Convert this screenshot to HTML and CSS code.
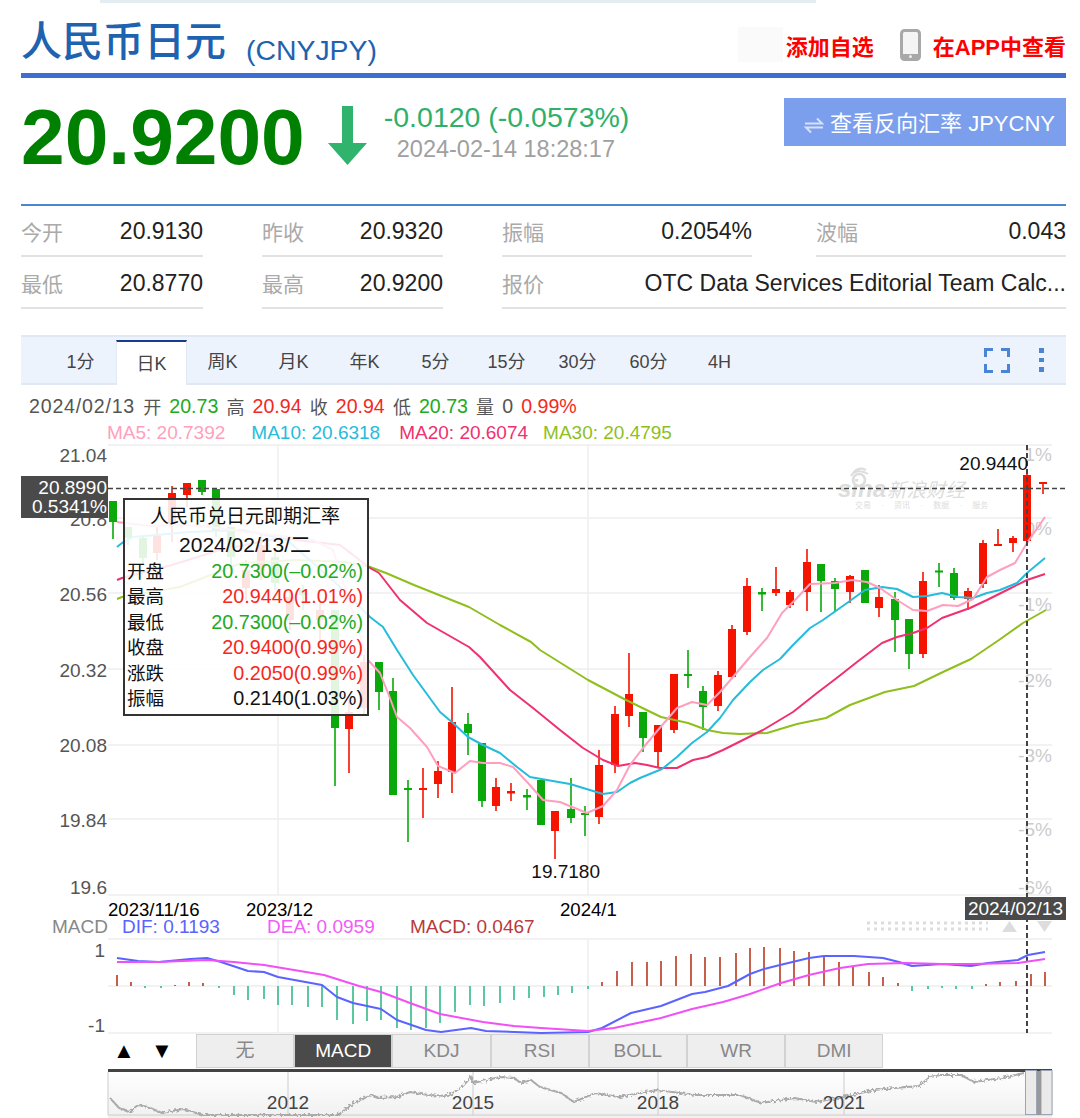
FILE: index.html
```html
<!DOCTYPE html>
<html lang="zh-CN">
<head>
  <meta charset="UTF-8">
  <title>人民币日元 (CNYJPY)</title>
  <link rel="stylesheet" href="styles.css">
</head>
<body>
  <div class="top-strip"></div>
  <div class="page">

    <header class="title-row">
      <h1>人民币日元</h1>
      <span class="symbol">(CNYJPY)</span>
      <div class="title-actions">
        <span class="blank-box"></span>
        <a class="action">添加自选</a>
        <svg class="phone" viewBox="0 0 21 32">
          <rect x="1.5" y="1.5" width="18" height="29" rx="3" fill="#f4f4f4" stroke="#a8a8a8" stroke-width="3"/>
          <rect x="1.5" y="25" width="18" height="5" fill="#a8a8a8"/>
          <circle cx="10.500" cy="27.500" r="1.500" fill="#eee"/>
        </svg>
        <a class="action">在APP中查看</a>
      </div>
    </header>

    <section class="quote">
      <div class="price">20.9200</div>
      <svg class="down-arrow" viewBox="0 0 39 59">
        <path d="M14 0h11v37h14L19.500 59 0 37h14z"/>
      </svg>
      <div class="change">
        <div class="change-value">-0.0120 (-0.0573%)</div>
        <div class="change-time">2024-02-14 18:28:17</div>
      </div>
      <a class="reverse-btn">
        <svg class="swap" viewBox="0 0 20 18">
          <path d="M1 7.500H18L13 2.500M19 11.500H2L7 16.500" fill="none" stroke="#d5e0fa" stroke-width="2"/>
        </svg>
        <span>查看反向汇率 JPYCNY</span>
      </a>
    </section>

    <section class="stats">
      <div class="stat"><span class="stat-label">今开</span><span class="stat-value">20.9130</span></div>
      <div class="stat"><span class="stat-label">昨收</span><span class="stat-value">20.9320</span></div>
      <div class="stat"><span class="stat-label">振幅</span><span class="stat-value">0.2054%</span></div>
      <div class="stat stat-last"><span class="stat-label">波幅</span><span class="stat-value">0.043</span></div>
      <div class="stat"><span class="stat-label">最低</span><span class="stat-value">20.8770</span></div>
      <div class="stat"><span class="stat-label">最高</span><span class="stat-value">20.9200</span></div>
      <div class="stat stat-wide"><span class="stat-label">报价</span><span class="stat-value">OTC Data Services Editorial Team Calc...</span></div>
    </section>

    <nav class="tabs">
      <a class="tab">1分</a>
      <a class="tab active">日K</a>
      <a class="tab">周K</a>
      <a class="tab">月K</a>
      <a class="tab">年K</a>
      <a class="tab">5分</a>
      <a class="tab">15分</a>
      <a class="tab">30分</a>
      <a class="tab">60分</a>
      <a class="tab">4H</a>
      <div class="tab-tools">
        <svg class="fullscreen" viewBox="0 0 26 25">
          <path d="M1.500 9V1.500H9M17 1.500H24.500V9M24.500 16V23.500H17M9 23.500H1.500V16" fill="none" stroke="#4a84d4" stroke-width="3"/>
        </svg>
        <div class="more"><i></i><i></i><i></i></div>
      </div>
    </nav>

    <div class="day-info">
      <span class="muted day-date">2024/02/13</span>
      <span class="muted cjk">开</span><span class="up">20.73</span>
      <span class="muted cjk">高</span><span class="dn">20.94</span>
      <span class="muted cjk">收</span><span class="dn">20.94</span>
      <span class="muted cjk">低</span><span class="up">20.73</span>
      <span class="muted cjk">量</span><span class="muted">0</span>
      <span class="dn">0.99%</span>
    </div>

    <div class="ma-info">
      <span class="ma5">MA5: 20.7392</span>
      <span class="ma10">MA10: 20.6318</span>
      <span class="ma20">MA20: 20.6074</span>
      <span class="ma30">MA30: 20.4795</span>
    </div>

    <div class="chart">
      <svg class="chart-svg" viewBox="21 444 1045 674">
        <defs>
          <linearGradient id="thumbFade" x1="0" y1="0" x2="0" y2="1">
            <stop offset="0" stop-color="#fff"/>
            <stop offset="1" stop-color="#f0f0f0"/>
          </linearGradient>
          <filter id="rough" x="-2%" y="-30%" width="104%" height="160%">
            <feTurbulence type="fractalNoise" baseFrequency="0.35" numOctaves="2" seed="4"/>
            <feDisplacementMap in="SourceGraphic" scale="5"/>
          </filter>
        </defs>

        <!-- grid -->
        <path class="grid" d="M108 445H1052M108 518H1052M108 593H1052M108 669H1052M108 745H1052M108 819H1052M108 895H1052M278 445V895M588 445V895M108 939H1052M108 986H1052M108 1033H1052M278 939V1033M588 939V1033"/>

        <!-- axis labels -->
        <g class="axis">
          <text x="107" y="462">21.04</text>
          <text x="107" y="526">20.8</text>
          <text x="107" y="601">20.56</text>
          <text x="107" y="677">20.32</text>
          <text x="107" y="752">20.08</text>
          <text x="107" y="827">19.84</text>
          <text x="107" y="894">19.6</text>
          <text x="105" y="957">1</text>
          <text x="105" y="1032">-1</text>
        </g>
        <g class="pct">
          <text x="1052" y="461">1%</text>
          <text x="1052" y="535">0%</text>
          <text x="1052" y="611">-1%</text>
          <text x="1052" y="687">-2%</text>
          <text x="1052" y="762">-3%</text>
          <text x="1052" y="836">-5%</text>
          <text x="1052" y="894">-6%</text>
        </g>

        <!-- watermark -->
        <g class="watermark">
          <circle cx="859" cy="480" r="6" fill="none" stroke="#ddd" stroke-width="2.500"/>
          <path d="M851 476C854 470 862 470 868 474M853 473C857 468 862 468 866 470" fill="none" stroke="#ddd" stroke-width="2"/>
          <text class="wm-sina" x="838" y="497">sina</text>
          <text class="wm-cn" x="887" y="497">新浪财经</text>
          <text class="wm-small" x="855" y="508">交易 · 资讯 · 数据 · 服务</text>
        </g>

        <!-- candles -->
        <path class="wick green" d="M113 501V539M128 527V545M143 535V565M202 480V495M216 489V537M231 527V570M275 552V590M303 585V610M335 610V786M379 662V710M393 678V795M408 780V842M468 713V755M482 743V807M527 789V810M541 780V825M571 778V823M585 806V836M643 712V752M688 650V688M703 686V730M762 588V611M821 564V612M835 578V612M865 570V603M895 592V652M909 619V669M939 563V587M954 568V600"/>
        <path class="body green" d="M113 501V522M128 527V538M143 538V558M202 480V492M216 489V532M231 527V557M275 557V583M303 590V595M335 610V728M379 662V692M393 691V795M408 788V790M468 724V733M482 743V801M527 795V797.500M541 780V825M571 809V818M585 813V815M643 712V738M688 674V676M703 691V707M762 592V594.500M821 564V581M835 581V589M865 570V603M895 599V620M909 619V654M939 570.500V572.500M954 573V598"/>
        <path class="wick red" d="M157 527V560M172 486V542M187 483V507M246 560V600M261 535V580M290 590V630M320 600V640M349 700V773M364 655V715M423 768V818M438 761V798M452 687V793M496 778V811M511 783V801M555 811V859M599 750V824M615 706V773M629 653V727M658 725V768M674 674V733M718 671V711M732 625V677M747 578V635M776 567V596M790 590V608M807 549V611M850 575V603M879 585V617M923 572V658M968 588V610M983 540V588M998 529V546M1013 536V552M1027 473V541M1043 482V494"/>
        <path class="body red" d="M157 535V553M172 493V526M187 483V495M246 570V588M261 545V571M290 597V620M320 610V620M349 712V729M364 662V708M423 788V790M438 771V784M452 722V772M496 787V806M511 791V793.500M555 811V831M599 765V817M615 714V765M629 694V716M658 725V752M674 674V730M718 675V706M732 629V677M747 586V632M776 589V593M790 592V605M807 562V592M850 576V592M879 597V608M923 581V654M968 591V599M983 543V584M998 544V546M1013 538V543M1027 475V541M1043 482V484"/>

        <!-- moving averages -->
        <polyline class="line ma30-line" points="117,599 122,597 180,587 241,563 297,560 345,562 370,567 386,573 414,585 469,607 500,625 531,642 540,650 588,680 626,700 661,717 688,723 707,730 723,733 740,734 767,733 797,724 826,718 850,705 885,692 914,686 943,672 971,659 999,640 1023,623 1046,610"/>
        <polyline class="line ma20-line" points="117,580 122,578 172,565 220,550 280,538 340,545 370,568 379,573 400,600 427,623 469,647 480,657 510,690 533,708 560,730 583,748 603,760 618,766 635,763 647,765 660,768 677,768 693,760 707,757 723,750 743,740 763,730 793,712 817,693 838,677 857,662 882,643 897,637 913,633 927,628 942,618 970,608 987,600 1007,590 1027,580 1045,574"/>
        <polyline class="line ma10-line" points="117,547 122,543 133,537 190,532 243,530 287,540 340,587 370,617 383,627 397,650 413,675 440,712 453,723 468,737 483,745 500,753 517,767 530,777 547,780 570,784 603,794 617,792 630,783 640,778 662,769 677,757 692,743 707,732 720,718 733,700 750,682 763,670 780,659 793,645 810,628 823,620 847,603 865,590 882,587 897,589 913,597 927,596 942,593 958,597 973,598 987,593 1000,590 1017,583 1027,573 1045,558"/>
        <polyline class="line ma5-line" points="117,522 150,526 172,525 187,525 210,527 240,531 290,537 313,540 333,550 368,660 380,673 388,693 397,717 410,728 427,747 438,766 455,773 470,761 483,763 500,763 513,767 528,783 543,800 560,802 587,813 603,806 617,790 630,765 643,748 658,730 677,708 692,702 707,705 720,692 733,677 750,657 767,638 782,613 797,598 810,584 835,583 852,580 867,582 880,588 897,600 913,610 927,611 943,605 958,606 973,599 987,577 1000,570 1015,563 1027,543 1045,517"/>

        <!-- crosshair -->
        <path class="cross" d="M108 488.500H1066"/>
        <path class="cross cross-v" d="M1027 445V1033"/>

        <text class="marker" x="1028" y="470">20.9440</text>
        <text class="marker" x="600" y="878">19.7180</text>

        <!-- price tag -->
        <rect class="tag" x="21" y="476" width="87" height="42"/>
        <text class="tag-text" x="107" y="494">20.8990</text>
        <text class="tag-text" x="107" y="513">0.5341%</text>

        <!-- date axis -->
        <text class="date" x="108" y="916">2023/11/16</text>
        <text class="date" x="246" y="916">2023/12</text>
        <text class="date" x="560" y="916">2024/1</text>
        <rect class="tag" x="965" y="897" width="101" height="23"/>
        <text class="tag-text" x="1063" y="915">2024/02/13</text>

        <!-- macd legend -->
        <text class="legend" x="52" y="933" fill="#888">MACD</text>
        <text class="legend" x="122" y="933" fill="#5a63ff">DIF: 0.1193</text>
        <text class="legend" x="267" y="933" fill="#f05cf5">DEA: 0.0959</text>
        <text class="legend" x="410" y="933" fill="#b83a3a">MACD: 0.0467</text>
        <path class="dots" d="M867 923H988M867 929H988"/>
        <path class="scroll-arrow" d="M1009.500 921L1017 932H1002zM1037 921H1052L1044.500 932z"/>

        <!-- macd bars -->
        <path class="bar bar-dn" d="M145 986V988M161 986V988M219 986V988M234 986V995M248 986V1000M264 986V999M278 986V1005M292 986V1005M308 986V1007M322 986V1007M337 986V1020M353 986V1024M367 986V1021M381 986V1020M397 986V1028M411 986V1030M426 986V1028M440 986V1023M455 986V1012M470 986V1005M484 986V1006M500 986V1003M514 986V1000M529 986V998M544 986V997M558 986V995M572 986V993M588 986V989M912 986V991M928 986V989M942 986V988M956 986V989M972 986V989"/>
        <path class="bar bar-up" d="M117 986V975M131 986V982M175 986V985M189 986V982M203 986V983M602 986V982M617 986V971M632 986V962M647 986V962M661 986V961M676 986V956M691 986V954M705 986V957M720 986V957M736 986V953M750 986V948M764 986V947M780 986V948M794 986V951M809 986V952M824 986V956M839 986V962M853 986V966M869 986V972M883 986V977M898 986V983M986 986V984M1000 986V982M1016 986V981M1031 986V974M1045 986V972"/>
        <polyline class="line dif-line" points="117,958 138,961 159,962 190,959 207,958 221,962 248,971 264,972 278,977 322,985 337,997 353,1003 381,1009 397,1020 426,1030 441,1032 471,1028 486,1031 541,1033 588,1032 602,1028 631,1013 661,1006 692,994 705,992 728,986 750,974 764,969 780,965 809,958 824,956 854,956 883,958 899,962 912,966 942,964 971,966 988,963 1018,960 1028,955 1045,952"/>
        <polyline class="line dea-line" points="117,962 159,962 207,960 234,962 264,965 324,975 359,986 381,992 410,1003 440,1014 483,1022 514,1026 541,1028 588,1031 614,1028 661,1018 692,1009 723,1002 750,994 781,983 809,975 840,968 868,964 905,963 942,964 971,964 1018,963 1045,959"/>

        <!-- range thumbnail -->
        <rect x="108" y="1072" width="944" height="46" fill="url(#thumbFade)"/>
        <path class="thumb-grid" d="M288 1072V1115M473 1072V1115M658 1072V1115M844 1072V1115M108 1072V1115H1052V1072"/>
        <polyline class="thumb-line" filter="url(#rough)" points="110,1098 119,1108 129,1112 138,1105 148,1107 162,1113 183,1109 203,1115 215,1115 338,1115 355,1102 372,1095 379,1098 397,1097 410,1092 428,1095 448,1096 462,1087 471,1077 473,1083 500,1077 514,1078 521,1083 531,1080 540,1087 561,1093 574,1102 595,1093 619,1097 657,1090 695,1095 740,1095 761,1103 795,1098 816,1102 843,1097 874,1090 895,1088 919,1086 930,1077 940,1075 961,1075 974,1082 1002,1078 1024,1073"/>
        <text class="year" x="288" y="1109">2012</text>
        <text class="year" x="473" y="1109">2015</text>
        <text class="year" x="658" y="1109">2018</text>
        <text class="year" x="844" y="1109">2021</text>
        <path class="thumb-top" d="M108 1070.500H1052"/>
        <rect class="handle" x="1025.500" y="1070.500" width="11" height="44"/>
        <rect class="handle" x="1041" y="1070.500" width="11" height="44"/>
        <rect x="1037" y="1071" width="4" height="44" fill="#999"/>
      </svg>

      <div class="tooltip">
        <div class="tip-title">人民币兑日元即期汇率</div>
        <div class="tip-title tip-date">2024/02/13/二</div>
        <div class="tip-row"><span>开盘</span><span class="up">20.7300(–0.02%)</span></div>
        <div class="tip-row"><span>最高</span><span class="dn">20.9440(1.01%)</span></div>
        <div class="tip-row"><span>最低</span><span class="up">20.7300(–0.02%)</span></div>
        <div class="tip-row"><span>收盘</span><span class="dn">20.9400(0.99%)</span></div>
        <div class="tip-row"><span>涨跌</span><span class="dn">0.2050(0.99%)</span></div>
        <div class="tip-row"><span>振幅</span><span>0.2140(1.03%)</span></div>
      </div>

      <div class="index-bar">
        <div class="step-btn">▲</div>
        <div class="step-btn">▼</div>
        <div class="index-tabs">
          <a class="index-tab">无</a>
          <a class="index-tab on">MACD</a>
          <a class="index-tab">KDJ</a>
          <a class="index-tab">RSI</a>
          <a class="index-tab">BOLL</a>
          <a class="index-tab">WR</a>
          <a class="index-tab">DMI</a>
        </div>
      </div>
    </div>

  </div>
</body>
</html>
```

FILE: styles.css
```css
:root {
  --font: "Liberation Sans", "Noto Sans CJK SC", sans-serif;
  --blue-title: #1e62b0;
  --red: #f51400;
  --green: #0aa80a;
}

body {
  margin: 0;
  background-color: white;
  font-family: var(--font);
  color: #222;
}

.top-strip {
  width: 716px;
  height: 3px;
  margin-left: 100px;
  background-color: #e4edf2;
}

.page {
  padding: 0 14px 0 21px;
}

/* title */
.title-row {
  display: flex;
  align-items: flex-start;
  height: 70px;
  border-bottom: 5px solid #3f6ed1;
}

h1 {
  margin: 12px 0 0;
  font-size: 41px;
  line-height: 54px;
  font-weight: 500;
  color: var(--blue-title);
}

.symbol {
  margin: 30px 0 0 20px;
  font-size: 28.400px;
  line-height: 34px;
  color: var(--blue-title);
}

.title-actions {
  display: flex;
  align-items: center;
  height: 35px;
  margin: 24px 0 0 auto;
}

.blank-box {
  width: 45px;
  height: 35px;
  margin-right: 3px;
  background-color: #fafafa;
}

.action {
  font-size: 22px;
  font-weight: 700;
  color: #f00;
  white-space: nowrap;
}

.phone {
  width: 21px;
  height: 32px;
  margin: 0 12px 0 26px;
}

/* price */
.quote {
  display: flex;
  align-items: flex-start;
  height: 126px;
}

.price {
  margin-top: 22px;
  font-size: 78.500px;
  line-height: 74px;
  font-weight: 700;
  color: #008000;
}

.down-arrow {
  width: 39px;
  height: 59px;
  margin: 28px 0 0 23px;
  fill: #2fb36d;
}

.change {
  margin: 22px 0 0 17px;
  white-space: nowrap;
}

.change-value {
  font-size: 28.500px;
  line-height: 34px;
  color: #2eb06a;
}

.change-time {
  margin: 0 0 0 13px;
  font-size: 23.500px;
  line-height: 30px;
  color: #a0a0a0;
}

.reverse-btn {
  display: flex;
  align-items: center;
  justify-content: flex-end;
  width: 282px;
  height: 48px;
  margin: 20px 0 0 auto;
  padding-right: 11px;
  box-sizing: border-box;
  background-color: #7b9fec;
  font-size: 22px;
  color: white;
  white-space: nowrap;
}

.reverse-btn span {
  padding-bottom: 3px;
}

.swap {
  width: 20px;
  height: 18px;
  margin: 6px 6px 0 0;
}

/* stats */
.stats {
  display: grid;
  grid-template-columns: 182px 181px 250px 255px;
  grid-auto-rows: 52px;
  column-gap: 59px;
  height: 103px;
  border-top: 2px solid #4d86d0;
}

.stat {
  display: flex;
  align-items: center;
  justify-content: space-between;
  height: 51px;
  padding-top: 1px;
  box-sizing: border-box;
  border-bottom: 2px solid #e2e2e2;
}

.stat-last {
  margin-left: 5px;
}

.stat-wide {
  grid-column: span 2;
}

.stat-label {
  font-size: 21px;
  color: #aaa;
}

.stat-value {
  font-size: 23px;
  color: #222;
  white-space: nowrap;
}

/* period tabs */
.tabs {
  display: flex;
  align-items: stretch;
  height: 46px;
  margin-top: 26px;
  padding-left: 24px;
  border-top: 2px solid #dfe8f3;
  border-bottom: 2px solid #dfe8f3;
  background-color: #edf3fd;
}

.tab {
  display: flex;
  align-items: center;
  justify-content: center;
  width: 71px;
  padding-top: 3px;
  box-sizing: border-box;
  font-size: 18px;
  line-height: 20px;
  color: #444;
}

.tab.active {
  margin: 3px 0 -2px;
  padding-top: 1px;
  border: solid #dfe8f3;
  border-width: 0 1px;
  border-top: 2px solid #1a3a8f;
  background-color: white;
}

.tab-tools {
  display: flex;
  align-items: center;
  margin-left: auto;
  padding-right: 22px;
}

.fullscreen {
  width: 26px;
  height: 25px;
  margin-right: 29px;
}

.more i {
  display: block;
  width: 5px;
  height: 4.500px;
  margin: 5px 0;
  background-color: #4a84d4;
}

/* info lines */
.day-info {
  display: flex;
  align-items: center;
  gap: 8.100px;
  height: 36px;
  padding: 6px 0 0 8px;
  box-sizing: border-box;
  font-size: 19.600px;
}

.day-date {
  letter-spacing: 0.800px;
}

.day-info .cjk {
  font-size: 18px;
}

.muted { color: #555; }
.up { color: #22aa22; }
.dn { color: #f5281e; }

.ma-info {
  display: flex;
  align-items: center;
  height: 23px;
  padding-left: 86px;
  font-size: 19px;
}

.ma5 { color: #ff9fbd; }
.ma10 { color: #25bcdc; margin-left: 26px; }
.ma20 { color: #f0306f; margin-left: 19px; }
.ma30 { color: #8fbf1c; margin-left: 15px; }

/* chart */
.chart {
  position: relative;
  height: 674px;
}

.chart-svg {
  display: block;
  width: 1045px;
  height: 674px;
  font-family: var(--font);
}

.grid {
  fill: none;
  stroke: #eee;
  stroke-width: 1.500;
}

.axis text {
  font-size: 19px;
  fill: #555;
  text-anchor: end;
}

.pct text {
  font-size: 19px;
  fill: #ccc;
  text-anchor: end;
}

.wm-sina {
  font-size: 24px;
  font-weight: 700;
  font-style: italic;
  fill: #ddd;
}

.wm-cn {
  font-size: 19.500px;
  font-style: italic;
  fill: #ddd;
}

.wm-small {
  font-size: 8px;
  word-spacing: 8px;
  fill: #ddd;
}

.wick, .body, .bar {
  fill: none;
}

.wick { stroke-width: 1.600; }
.body { stroke-width: 8; }
.green { stroke: var(--green); }
.red { stroke: var(--red); }

.line {
  fill: none;
  stroke-width: 2;
  stroke-linejoin: round;
}

.ma5-line { stroke: #ff9fbd; }
.ma10-line { stroke: #25bcdc; }
.ma20-line { stroke: #f0306f; }
.ma30-line { stroke: #8fbf1c; }
.dif-line { stroke: #5a63ff; }
.dea-line { stroke: #f050f5; }

.cross {
  fill: none;
  stroke: #444;
  stroke-width: 1.300;
  stroke-dasharray: 5 3;
}

.cross-v {
  stroke-width: 2;
}

.marker {
  font-size: 19px;
  fill: #111;
  text-anchor: end;
}

.tag {
  fill: #4a4a4a;
}

.tag-text {
  font-size: 19px;
  fill: white;
  text-anchor: end;
}

.date {
  font-size: 18.600px;
  fill: black;
}

.legend {
  font-size: 19px;
}

.dots {
  fill: none;
  stroke: #ddd;
  stroke-width: 3;
  stroke-dasharray: 3 4;
}

.scroll-arrow {
  fill: #ddd;
}

.bar { stroke-width: 1.600; }
.bar-up { stroke: #b93a20; }
.bar-dn { stroke: #33bb88; }

.thumb-grid {
  fill: none;
  stroke: #ccc;
  stroke-width: 1;
}

.thumb-line {
  fill: none;
  stroke: #aaa;
  stroke-width: 2;
}

.year {
  font-size: 19px;
  fill: #444;
  text-anchor: middle;
}

.thumb-top {
  fill: none;
  stroke: #444;
  stroke-width: 3;
}

.handle {
  fill: #eaeaea;
  stroke: #9aa6b8;
  stroke-width: 1;
}

/* tooltip over the chart */
.tooltip {
  position: absolute;
  left: 102px;
  top: 54px;
  width: 246px;
  height: 218px;
  padding: 3px 4px 0 2px;
  box-sizing: border-box;
  border: 2px solid #333;
  background-color: rgba(255, 255, 255, 0.88);
  font-size: 19.800px;
  line-height: 25.400px;
  color: #111;
}

.tip-title {
  height: 28px;
  font-size: 19px;
  line-height: 28px;
  text-align: center;
}

.tip-date {
  font-size: 21px;
}

.tip-row {
  display: flex;
  justify-content: space-between;
  height: 25.400px;
}

.tip-row span:first-child {
  font-size: 18.500px;
}

/* index buttons under the macd pane */
.index-bar {
  position: absolute;
  left: 87px;
  top: 590px;
  display: flex;
  height: 34px;
}

.step-btn {
  display: flex;
  align-items: center;
  justify-content: center;
  width: 32px;
  margin-right: 6px;
  font-size: 22px;
  line-height: 24px;
  color: black;
}

.index-tabs {
  display: flex;
  margin-left: 12px;
}

.index-tab {
  display: flex;
  align-items: center;
  justify-content: center;
  width: 98.200px;
  box-sizing: border-box;
  border: 1px solid #d2d2d2;
  background-color: #eee;
  font-size: 19px;
  line-height: 22px;
  color: #888;
}

.index-tab.on {
  background-color: #4a4a4a;
  color: white;
}
```
